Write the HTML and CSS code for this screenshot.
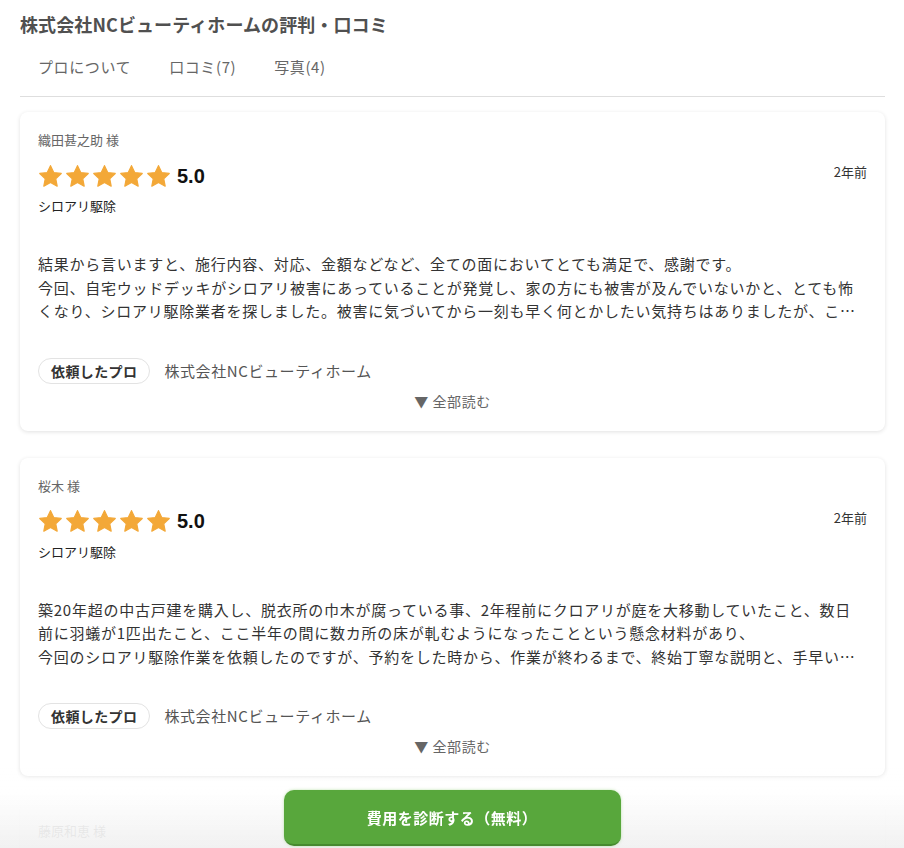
FILE: index.html
```html
<!DOCTYPE html>
<html lang="ja">
<head>
<meta charset="utf-8">
<title>株式会社NCビューティホームの評判・口コミ</title>
<link rel="stylesheet" href="styles.css">
</head>
<body>
<svg width="0" height="0" class="defs">
  <defs>
    <symbol id="star" viewBox="0 0 24 24">
      <path d="M12 1.6l3.1 6.6 7.2.9-5.3 5 1.4 7.2L12 17.8l-6.4 3.5L7 14.1l-5.3-5 7.2-.9z" fill="#f3a838" stroke="#f3a838" stroke-width="1.2" stroke-linejoin="round"/>
    </symbol>
  </defs>
</svg>
<main class="page">
  <h1 class="title">株式会社NCビューティホームの評判・口コミ</h1>
  <nav class="tabs">
    <span class="tab">プロについて</span>
    <span class="tab">口コミ(7)</span>
    <span class="tab">写真(4)</span>
  </nav>

  <section class="reviews">
    <article class="card">
      <div class="name">織田甚之助 様</div>
      <div class="rating-row">
        <div class="rating">
          <span class="stars">
            <svg class="star"><use href="#star"/></svg>
            <svg class="star"><use href="#star"/></svg>
            <svg class="star"><use href="#star"/></svg>
            <svg class="star"><use href="#star"/></svg>
            <svg class="star"><use href="#star"/></svg>
          </span>
          <span class="score">5.0</span>
        </div>
        <span class="date">2年前</span>
      </div>
      <div class="category">シロアリ駆除</div>
      <p class="body">結果から言いますと、施行内容、対応、金額などなど、全ての面においてとても満足で、感謝です。<br>今回、自宅ウッドデッキがシロアリ被害にあっていることが発覚し、家の方にも被害が及んでいないかと、とても怖くなり、シロアリ駆除業者を探しました。被害に気づいてから一刻も早く何とかしたい気持ちはありましたが、ここは慎重に選ばなければと思い、いくつかの業者さんに見積もりをお願いしました。</p>
      <div class="pro">
        <span class="pill">依頼したプロ</span>
        <span class="pro-name">株式会社NCビューティホーム</span>
      </div>
      <div class="more">▼ 全部読む</div>
    </article>

    <article class="card">
      <div class="name">桜木 様</div>
      <div class="rating-row">
        <div class="rating">
          <span class="stars">
            <svg class="star"><use href="#star"/></svg>
            <svg class="star"><use href="#star"/></svg>
            <svg class="star"><use href="#star"/></svg>
            <svg class="star"><use href="#star"/></svg>
            <svg class="star"><use href="#star"/></svg>
          </span>
          <span class="score">5.0</span>
        </div>
        <span class="date">2年前</span>
      </div>
      <div class="category">シロアリ駆除</div>
      <p class="body">築20年超の中古戸建を購入し、脱衣所の巾木が腐っている事、2年程前にクロアリが庭を大移動していたこと、数日<br>前に羽蟻が1匹出たこと、ここ半年の間に数カ所の床が軋むようになったことという懸念材料があり、<br>今回のシロアリ駆除作業を依頼したのですが、予約をした時から、作業が終わるまで、終始丁寧な説明と、手早い作業で本当に安心してお任せすることができました。</p>
      <div class="pro">
        <span class="pill">依頼したプロ</span>
        <span class="pro-name">株式会社NCビューティホーム</span>
      </div>
      <div class="more">▼ 全部読む</div>
    </article>

    <article class="card">
      <div class="name">藤原和恵 様</div>
      <div class="rating-row">
        <div class="rating">
          <span class="stars">
            <svg class="star"><use href="#star"/></svg>
            <svg class="star"><use href="#star"/></svg>
            <svg class="star"><use href="#star"/></svg>
            <svg class="star"><use href="#star"/></svg>
            <svg class="star"><use href="#star"/></svg>
          </span>
          <span class="score">5.0</span>
        </div>
        <span class="date">2年前</span>
      </div>
      <div class="category">シロアリ駆除</div>
      <p class="body">丁寧に対応していただきました。</p>
    </article>
  </section>
</main>

<div class="cta-bar">
  <button class="cta" type="button">費用を診断する（無料）</button>
</div>
</body>
</html>
```

FILE: styles.css
```css
* { box-sizing: border-box; }

html, body {
  margin: 0;
  padding: 0;
  background: #fff;
}

body {
  font-family: "Noto Sans CJK JP", "Noto Sans", sans-serif;
  color: #333;
}

.defs {
  position: absolute;
  width: 0;
  height: 0;
  overflow: hidden;
}

.page {
  padding: 11px 19px 40px 20px;
}

.title {
  margin: 0;
  font-size: 18px;
  line-height: 26px;
  font-weight: 700;
  color: #505050;
  letter-spacing: 0.1px;
}

.tabs {
  display: flex;
  gap: 2px;
  padding: 19px 0 18px;
  border-bottom: 1px solid #dedede;
}

.tab {
  padding: 0 18px;
  font-size: 15px;
  line-height: 22px;
  color: #666;
  letter-spacing: 0.6px;
}

.reviews {
  display: flex;
  flex-direction: column;
  gap: 27px;
  margin-top: 15px;
}

.card {
  background: #fff;
  border-radius: 8px;
  box-shadow: 0 1px 4px rgba(0, 0, 0, 0.12);
  padding: 18px 18px 20px;
}

.name {
  font-size: 13px;
  line-height: 20px;
  color: #666;
}

.rating-row {
  display: flex;
  justify-content: space-between;
  margin-top: 12px;
}

.rating {
  display: flex;
  align-items: center;
  height: 28px;
}

.stars {
  display: flex;
  gap: 2px;
}

.star {
  width: 25px;
  height: 25px;
}

.score {
  margin-left: 6px;
  font-family: "Liberation Sans", "Noto Sans", sans-serif;
  font-size: 20px;
  font-weight: 700;
  color: #111;
}

.date {
  align-self: flex-start;
  font-size: 13px;
  line-height: 20px;
  color: #333;
}

.category {
  margin-top: 6px;
  font-size: 13px;
  line-height: 20px;
  color: #222;
}

.body {
  margin: 36px 0 0;
  font-size: 15px;
  line-height: 23.5px;
  letter-spacing: 0.75px;
  color: #333;
  display: -webkit-box;
  -webkit-line-clamp: 3;
  -webkit-box-orient: vertical;
  overflow: hidden;
}

.pro {
  display: flex;
  align-items: center;
  gap: 14px;
  margin-top: 35px;
}

.pill {
  display: inline-flex;
  align-items: center;
  height: 26px;
  padding: 0 12px;
  border: 1px solid #e3e3e3;
  border-radius: 13px;
  font-size: 14px;
  font-weight: 700;
  color: #333;
  letter-spacing: 0.4px;
}

.pro-name {
  font-size: 15px;
  line-height: 22px;
  color: #555;
  letter-spacing: 0.6px;
}

.more {
  margin-top: 7px;
  text-align: center;
  font-size: 14px;
  line-height: 20px;
  color: #666;
  letter-spacing: 0.6px;
}

.cta-bar {
  position: fixed;
  left: 0;
  right: 0;
  bottom: 0;
  height: 80px;
  display: flex;
  justify-content: center;
  align-items: flex-end;
  padding-bottom: 2px;
  background: linear-gradient(to bottom,
    rgba(255, 255, 255, 0) 0%,
    rgba(255, 255, 255, 0.88) 30%,
    rgba(240, 240, 240, 0.92) 100%);
}

.cta {
  width: 337px;
  height: 56px;
  border: none;
  border-bottom: 2px solid #468a2e;
  border-radius: 10px;
  background: #58a73c;
  color: #fff;
  font-family: "Noto Sans CJK JP", sans-serif;
  font-size: 15px;
  font-weight: 700;
  letter-spacing: 0.5px;
  box-shadow: 0 0 3px rgba(120, 200, 90, 0.5);
}
```
